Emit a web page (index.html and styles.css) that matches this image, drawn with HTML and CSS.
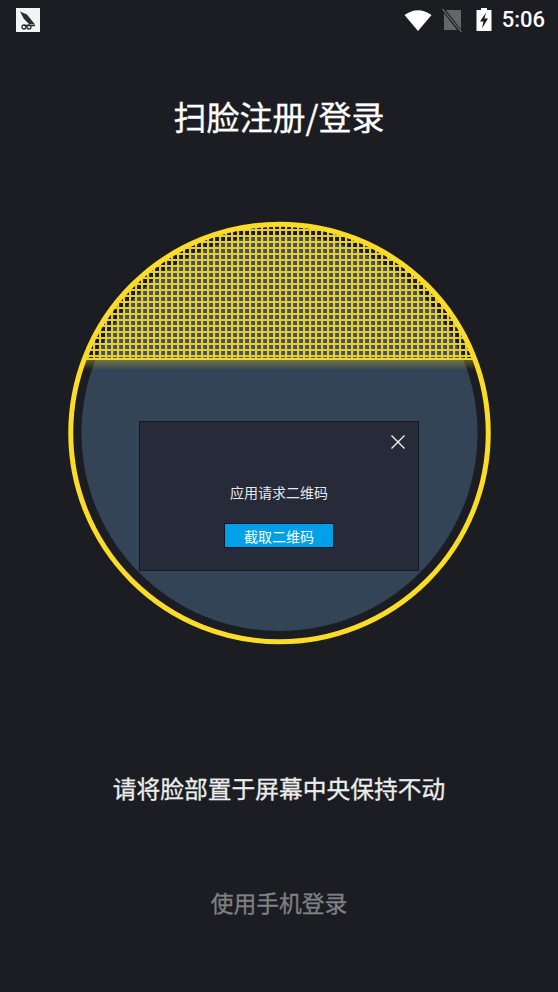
FILE: index.html
```html
<!DOCTYPE html>
<html lang="zh-CN">
<head>
  <meta charset="UTF-8" />
  <meta name="viewport" content="width=device-width, initial-scale=1.0"/>
  <title>扫脸注册/登录</title>
  <link rel="stylesheet" href="styles.css">
</head>
<body>
  <header class="status-bar">
    <div class="app-icon">
      <svg width="24" height="24" viewBox="0 0 24 24">
        <rect width="24" height="24" fill="#f4f4f4"/>
        <path d="M4 3.500 L11 6.500 L19 16.500 L13 16 L8 11 Z" fill="#2b2d33"/>
        <path d="M8 17.500 H19" stroke="#2b2d33" stroke-width="1.500" fill="none"/>
        <circle cx="8" cy="19" r="2" fill="none" stroke="#2b2d33" stroke-width="1.300"/>
        <circle cx="13" cy="19" r="2" fill="none" stroke="#2b2d33" stroke-width="1.300"/>
      </svg>
    </div>
    <div class="status-right">
      <svg class="wifi" width="28" height="22" viewBox="0 0 28 22">
        <path d="M0.500 6 Q14 -3.500 27.500 6 L14 22 Z" fill="#fff"/>
      </svg>
      <svg class="sim" width="20" height="24" viewBox="0 0 20 24">
        <path d="M2 2 H19 V22 H2 Z" fill="#666"/>
        <path d="M0 0 L19 24" stroke="#1b1d22" stroke-width="3.500"/>
        <path d="M0.500 1 L19.500 24" stroke="#666" stroke-width="1.200"/>
      </svg>
      <svg class="battery" width="16" height="24" viewBox="0 0 16 24">
        <path d="M5 0 H11 V2 H15.500 V23 H0.500 V2 H5 Z" fill="#fff"/>
        <path d="M10 4.500 L4 13.500 H7.500 L6 20.500 L12 10.500 H8.500 Z" fill="#1b1d22"/>
      </svg>
      <span class="time">5:06</span>
    </div>
  </header>

  <main>
    <h1 class="title">扫脸注册/登录</h1>

    <div class="scanner">
      <svg width="426" height="424" viewBox="0 0 426 424">
        <defs>
          <pattern id="grid" x="3" y="2" width="6" height="6" patternUnits="userSpaceOnUse">
            <path d="M0 1 H6 M1 0 V6" stroke="#e6cd33" stroke-width="2.200" fill="none"/>
          </pattern>
          <filter id="soft" x="-5%" y="-5%" width="110%" height="110%">
            <feGaussianBlur stdDeviation="0.400"/>
          </filter>
          <clipPath id="outer"><circle cx="213.500" cy="212" r="209"/></clipPath>
          <clipPath id="top"><rect x="0" y="0" width="426" height="138"/></clipPath>
          <linearGradient id="glow" x1="0" y1="0" x2="0" y2="1">
            <stop offset="0" stop-color="#e8cc30" stop-opacity="0.35"/>
            <stop offset="1" stop-color="#e8cc30" stop-opacity="0"/>
          </linearGradient>
        </defs>
        <circle cx="213.500" cy="212" r="198" fill="#334456"/>
        <circle cx="213.500" cy="212" r="198" fill="#46545a" clip-path="url(#top)"/>
        <g clip-path="url(#outer)">
          <g clip-path="url(#top)">
            <rect width="426" height="138" fill="url(#grid)" filter="url(#soft)"/>
          </g>
          <rect x="0" y="137" width="426" height="2" fill="#f0d52c"/>
          <rect x="0" y="139" width="426" height="10" fill="url(#glow)"/>
        </g>
        <circle cx="213.500" cy="212" r="208.750" fill="none" stroke="#fcdc27" stroke-width="5"/>
      </svg>

      <div class="qr-dialog">
        <button class="close-btn" aria-label="关闭">
          <svg width="14" height="14" viewBox="0 0 14 14">
            <path d="M0.500 0.500 L13.500 13.500 M13.500 0.500 L0.500 13.500" stroke="#fff" stroke-width="1.200" fill="none"/>
          </svg>
        </button>
        <p class="qr-msg">应用请求二维码</p>
        <button class="qr-btn">截取二维码</button>
      </div>
    </div>

    <p class="hint">请将脸部置于屏幕中央保持不动</p>
    <a class="phone-login" href="#">使用手机登录</a>
  </main>
</body>
</html>
```

FILE: styles.css
```css
* {
  box-sizing: border-box;
}
body {
  margin: 0;
  width: 558px;
  height: 992px;
  overflow: hidden;
  background-color: #1b1d22;
  color: #fff;
  font-family: 'Noto Sans CJK SC', 'Noto Sans', sans-serif;
}
.status-bar {
  height: 40px;
  padding: 8px 13px 0 16px;
  display: flex;
  justify-content: space-between;
  align-items: flex-start;
}
.app-icon svg,
.status-right svg {
  display: block;
}
.status-right {
  display: flex;
  align-items: center;
}
.wifi {
  margin-right: 10px;
}
.sim {
  margin-right: 14px;
}
.battery {
  margin-right: 10px;
}
.time {
  font-family: Roboto, sans-serif;
  font-size: 22px;
  font-weight: 500;
  line-height: 24px;
  color: #fff;
}
main {
  display: flex;
  flex-direction: column;
  align-items: center;
}
.title {
  margin: 47px 0 0;
  font-size: 33px;
  font-weight: 400;
  line-height: 58px;
  -webkit-text-stroke: 0.300px #fff;
}
.scanner {
  position: relative;
  width: 426px;
  height: 424px;
  margin-top: 76px;
}
.scanner > svg {
  display: block;
}
.qr-dialog {
  position: absolute;
  left: 73px;
  top: 200px;
  width: 280px;
  height: 150px;
  background-color: #262a39;
  border: 1px solid #161a26;
  display: flex;
  flex-direction: column;
  align-items: center;
}
.close-btn {
  position: absolute;
  top: 13px;
  right: 13px;
  padding: 0;
  border: none;
  background: none;
  line-height: 0;
}
.qr-msg {
  margin: 60px 0 0;
  font-size: 14px;
  line-height: 20px;
  color: #e6e8ec;
}
.qr-btn {
  margin-top: 21px;
  width: 110px;
  height: 25px;
  padding: 0;
  background-color: #00a0e9;
  border: 1px solid #101426;
  color: #fff;
  font-family: inherit;
  font-size: 14px;
  line-height: 22px;
}
.hint {
  margin: 125px 0 0;
  font-size: 23.750px;
  font-weight: 400;
  line-height: 36px;
  color: #eceded;
  -webkit-text-stroke: 0.300px #eceded;
}
.phone-login {
  margin-top: 79px;
  font-size: 22.750px;
  font-weight: 400;
  line-height: 36px;
  color: #808184;
  text-decoration: none;
  -webkit-text-stroke: 0.300px #808184;
}
```
